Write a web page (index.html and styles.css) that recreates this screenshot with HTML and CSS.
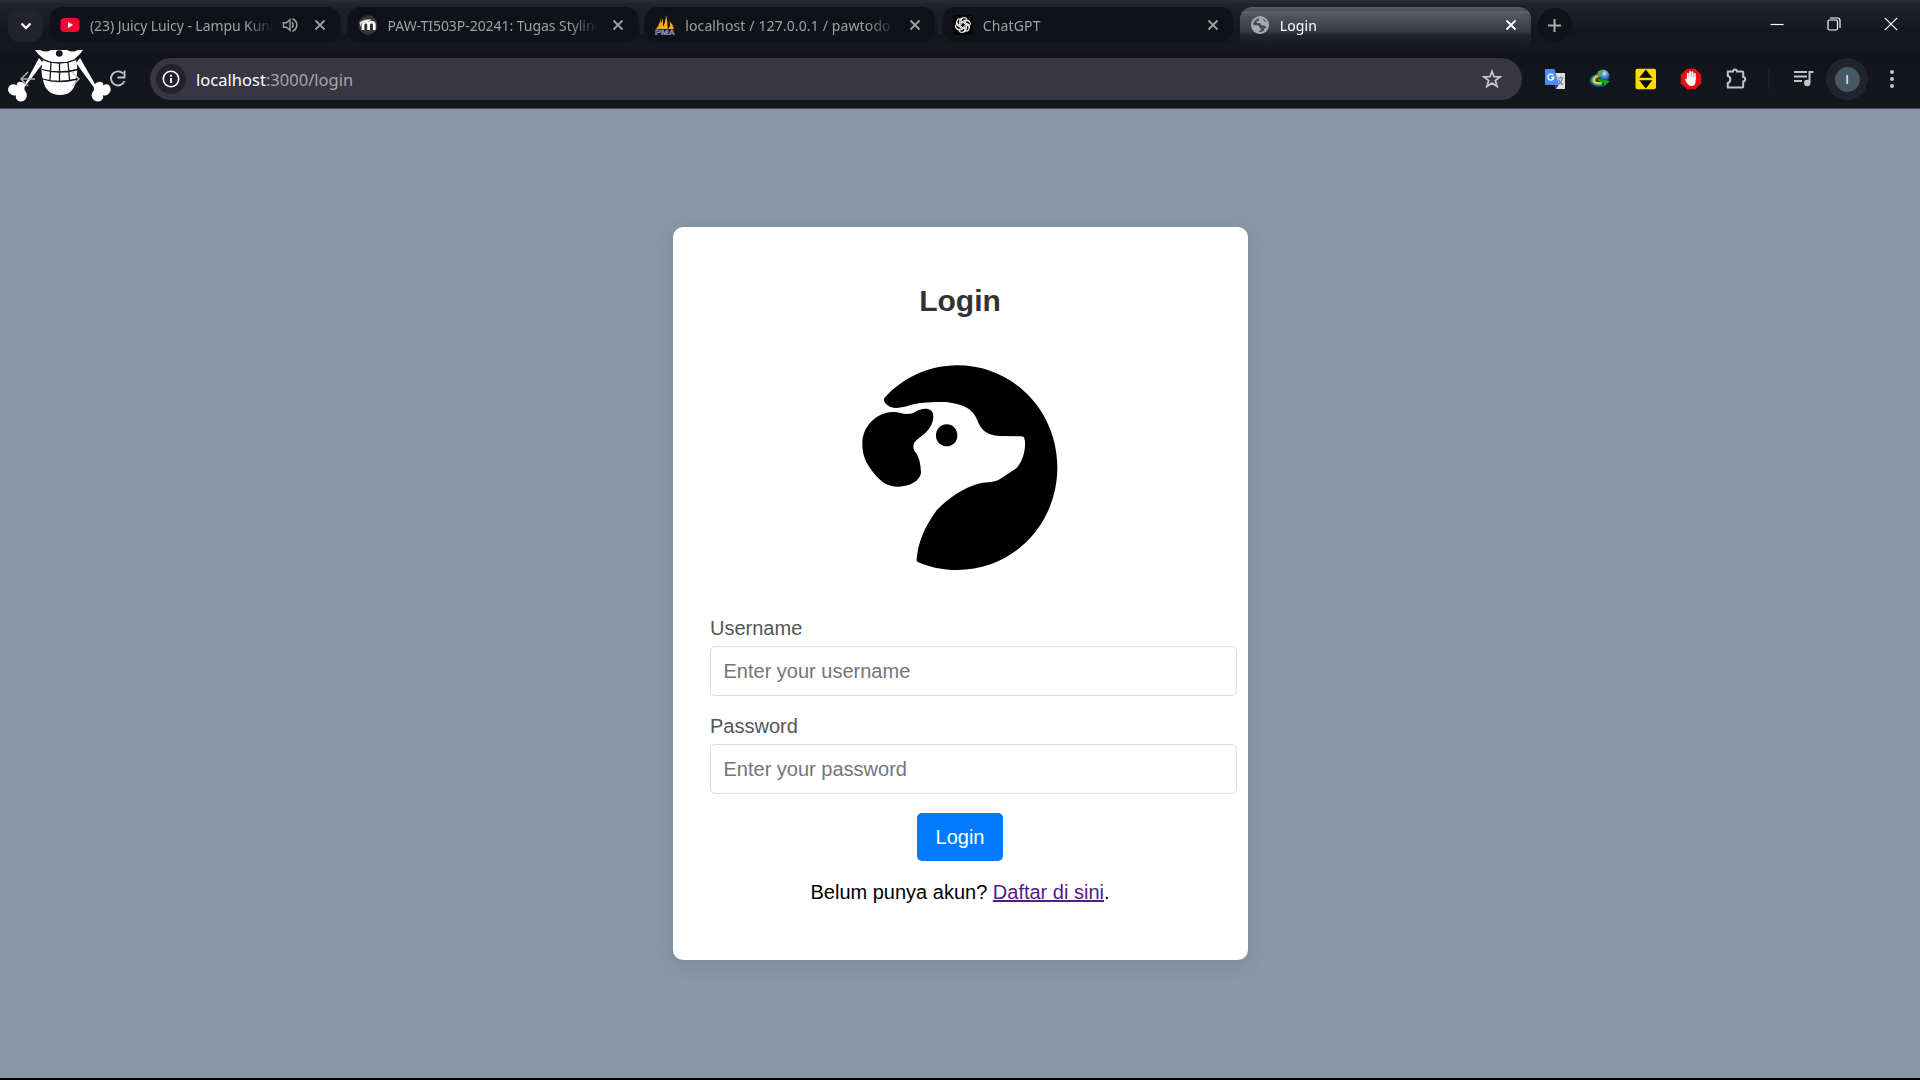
FILE: index.html
```html
<!DOCTYPE html>
<html lang="id">
<head>
<meta charset="utf-8">
<title>Login</title>
<link rel="stylesheet" href="styles.css">
</head>
<body>
<svg class="defs" width="0" height="0" aria-hidden="true">
  <symbol id="x" viewBox="0 0 12 12"><path d="M1.500 1.500l9 9M10.500 1.500l-9 9" stroke="currentColor" stroke-width="1.800" fill="none"/></symbol>
</svg>
<header class="browser">
  <div class="tabstrip">
    <button class="tab-search"><svg width="12" height="8" viewBox="0 0 12 8"><path d="M1.500 1.500L6 6l4.500-4.500" fill="none" stroke="#fff" stroke-width="2.300"/></svg></button>
    <div class="tabs">
      <div class="tab">
        <svg class="favicon" viewBox="0 0 20 20"><rect x="0.500" y="3" width="19" height="14" rx="4" fill="#ff0033"/><path d="M8 7l5 3-5 3z" fill="#fff"/></svg>
        <span class="title snug">(23) Juicy Luicy - Lampu Kuning</span>
        <svg class="audio" viewBox="0 0 16 16"><path d="M1.500 5.700h3L8 2.500v11L4.500 10.300h-3z" fill="none" stroke="currentColor" stroke-width="1.400"/><path d="M10 5.200q2.300 2.800 0 5.600M10.500 1.800q4.300 1.700 4.300 6.200t-4.300 6.200" fill="none" stroke="currentColor" stroke-width="1.500"/></svg>
        <svg class="close"><use href="#x"/></svg>
      </div>
      <i class="divider"></i>
      <div class="tab">
        <svg class="favicon" viewBox="0 0 20 20"><circle cx="10" cy="10" r="9.700" fill="#343434"/><path d="M5 15V9.500q0-2.300 2.700-2.300t2.900 2.300V15M10.600 15V9.500q0-2.300 2.800-2.300t2.900 2.300V15" fill="none" stroke="#fff" stroke-width="2.700"/><path d="M1.500 7.500L7 5l6-.5-5 3-5 .3-.3 4" fill="#eee" stroke="#ddd" stroke-width=".5"/></svg>
        <span class="title">PAW-TI503P-20241: Tugas Styling</span>
        <svg class="close"><use href="#x"/></svg>
      </div>
      <i class="divider"></i>
      <div class="tab">
        <svg class="favicon" viewBox="0 0 20 20"><path d="M1 14Q5 9 5.500 3.500Q6.500 9 6 14zM6.500 14Q11 8 11 0Q13 7 12.500 14zM13 14q3-3 1.500-8q4 4 4.500 8z" fill="#f89c0e"/><path d="M3 14Q7 8 8 3v11zM8 14Q11 8 11 0l1.500 14zM15 14l1-6 1 6z" fill="#f0ab45"/><text class="pma" x="0" y="19.500" textLength="20" lengthAdjust="spacingAndGlyphs">PMA</text></svg>
        <span class="title wide">localhost / 127.0.0.1 / pawtodo /</span>
        <svg class="close"><use href="#x"/></svg>
      </div>
      <i class="divider"></i>
      <div class="tab">
        <svg class="favicon" viewBox="0 0 20 20"><rect width="20" height="20" rx="3" fill="#050505"/><g fill="none" stroke="#f2f2f2" stroke-width="1.200"><path id="petal" d="M8 10V5.500A3.200 3.200 0 0 1 13.800 4M8 7.400l3.800-2.200q2.500-1 4.200 1"/><use href="#petal" transform="rotate(60 10 10)"/><use href="#petal" transform="rotate(120 10 10)"/><use href="#petal" transform="rotate(180 10 10)"/><use href="#petal" transform="rotate(240 10 10)"/><use href="#petal" transform="rotate(300 10 10)"/></g></svg>
        <span class="title wide">ChatGPT</span>
        <svg class="close"><use href="#x"/></svg>
      </div>
      <div class="tab active">
        <svg class="favicon" viewBox="0 0 20 20"><circle cx="10" cy="10" r="9" fill="#a9abb4"/><path d="M9.500 3.200C5.500 3.800 3 7 3 9.800q1.500.7 3.800.5 2.700.2 2.400 2.400l1.500.4v2.200l-2.400 1.200q3 1.200 5.500-.8l.7-2.300 2-1.200-2-1.700-3-.2-1.500-2.300H6.800V6.300l2-.4zM12.800 3.500l1 2.300 2.700 2.100q-1-3.200-3.700-4.400z" fill="#4a4c57"/></svg>
        <span class="title wide">Login</span>
        <svg class="close"><use href="#x"/></svg>
      </div>
    </div>
    <button class="new-tab"><svg width="13" height="13" viewBox="0 0 13 13"><path d="M6.500 0v13M0 6.500h13" stroke="#a9a9a9" stroke-width="2"/></svg></button>
    <div class="window-controls">
      <svg viewBox="0 0 14 14"><path d="M.5 7.500h13" stroke="#fff" stroke-width="1.200"/></svg>
      <svg viewBox="0 0 14 14"><rect x="1" y="3" width="9.500" height="10" rx="1.500" fill="none" stroke="#fff" stroke-width="1.200"/><path d="M3 1h7.500q2.500 0 2.500 2.500V11" fill="none" stroke="#fff" stroke-width="1.200"/></svg>
      <svg viewBox="0 0 14 14"><path d="M.8.8l12.400 12.400M13.200.8L.8 13.200" stroke="#fff" stroke-width="1.200"/></svg>
    </div>
  </div>
  <div class="toolbar">
    <svg class="nav" width="130" height="58" viewBox="0 0 130 58">
      <g fill="#fff">
        <path d="M35 0h48Q77 9 68 12H51Q41 9 35 0z"/>
        <path d="M39 8L25 34q-3-3-6.500-2-2.500 1.500-1.500 3.500-5-3-8 1-3 5.500 3 8.500 1.500.7 4 .2-1 4 3 6 5 1 7-3 2-3-.5-7-1.500-1.500-1-4L43 13z"/>
        <path d="M80 8l15 26q3-3 6.500-2 2.500 1.500 1.500 3.500 5-3 7 1 2.500 5.500-3 8.500-1.500.7-4 .2 1 4-3 6-5 1-7.500-3-2-3 .5-7 1.500-1.500.8-4L76 13z"/>
        <path d="M43 9q15 7 33 0 2.500 11 0 21-2 15-16 15T43 30q-3-10 0-21z"/>
      </g>
      <g fill="none" stroke="#14161e" stroke-width="1.300">
        <path d="M42.500 9.500q16 7 34 0M42 19.500q17 5 36 0M42.500 29q16 5 35 0M51 12l-1 18M59.500 13v18M68 12l1.500 18"/>
      </g>
      <path d="M40 0h11q-5 3-11 0zM67 0h11q-6 3-11 0z" fill="#14161e"/>
      <circle cx="59.300" cy="3.500" r="3.300" fill="#14161e"/>
      <path d="M35 29H22M28 22l-7 7 7 7" fill="none" stroke="#b2b2b2" stroke-width="1.500"/>
      <path d="M72 22l7 7-7 7" fill="none" stroke="#c9c9c9" stroke-width="1.400"/>
      <path d="M124.500 31a7 7 0 1 1-1.500-7.500M124.500 20.500v7h-7" fill="none" stroke="#c3c3c5" stroke-width="1.900"/>
    </svg>
    <div class="omnibox">
      <span class="site-info"><svg width="18" height="18" viewBox="0 0 18 18"><circle cx="9" cy="9" r="7.700" fill="none" stroke="#fff" stroke-width="1.600"/><path d="M9 8v5M9 4.800v1.900" stroke="#fff" stroke-width="1.800"/></svg></span>
      <span class="url"><b>localhost</b>:3000/login</span>
      <svg class="star" width="20" height="20" viewBox="0 0 20 20"><path d="M10 2.200l2 5.400 6.200.2-4.900 3.700 1.800 6-5.100-3.500-5.100 3.500 1.800-6L1.800 7.800 8 7.600z" fill="none" stroke="#c6c6ca" stroke-width="1.700"/></svg>
    </div>
    <div class="extensions">
      <svg viewBox="0 0 22 22"><path d="M9 5h12v16H12z" fill="#dedede"/><path d="M13.500 10h6M16.500 8.500V10M18.500 10q-1 5-5 6.500M14.500 11.500q1 3.500 4.500 5" fill="none" stroke="#6b7f90" stroke-width="1.200"/><path d="M11 17h3.500L12 21z" fill="#3730c8"/><path d="M1 1h9.500L15 17H2q-1 0-1-1z" fill="#4b8bf5"/><path d="M9.200 7.300A3 3 0 1 0 9.800 9.500H7.200" fill="none" stroke="#fff" stroke-width="1.400"/></svg>
      <svg viewBox="0 0 22 22"><defs><radialGradient id="globe" cx=".6" cy=".3"><stop offset="0" stop-color="#cbe6ff"/><stop offset=".5" stop-color="#5595d4"/><stop offset="1" stop-color="#164b90"/></radialGradient></defs><circle cx="14" cy="8" r="6.500" fill="url(#globe)"/><path d="M9 3q4-1 5 1l-2 4-4 2z" fill="#67a832"/><g fill="none"><path d="M9 6Q0 9 2 14q3 5 12 3.500" stroke="#2648c4" stroke-width="1.800"/><path d="M9 7Q2 10 3.500 13.500q3 4 10 2.500" stroke="#33cf35" stroke-width="1.600"/><path d="M9 8Q3.500 11 5.200 13.500q2.500 2.500 8 1" stroke="#ffe23f" stroke-width="1.800"/><path d="M9 9.500Q5 12 8 13.400" stroke="#e2322b" stroke-width="1.500"/></g><path d="M9 11l12 2-6.500 6 .5-3.500L9 13z" fill="#13a713"/></svg>
      <svg viewBox="0 0 22 22"><rect x=".5" y=".7" width="20.500" height="20.500" rx="2" fill="#ffdc00"/><path d="M10.800 1.500l6.500 8.300h-13zM10.800 20.500l6.500-8.300h-13z" fill="#090900"/></svg>
      <svg viewBox="0 0 22 22"><path d="M6.800.8h8.400l6 6v8.400l-6 6H6.800l-6-6V6.800z" fill="#ed0c13"/><path d="M7.800 11V5.700M10.100 10V4M12.400 10V4.300M14.700 11V6" stroke="#fff" stroke-width="1.900" stroke-linecap="round"/><path d="M6.800 9h8.800v4q0 5-4 5-3 0-5.300-4l-1.600-2.700q1-1 2.100.4z" fill="#fff"/></svg>
      <svg viewBox="0 0 22 22"><path d="M2.800 3.500H8q.2-2 2-2t2 2h5.200q1 0 1 1V9q2 .2 2 2.200t-2 2.200v5q0 1-1 1H2.800v-4.500q2.500-.6 2.500-3.500T2.800 8z" fill="none" stroke="#c3c3c5" stroke-width="2"/></svg>
    </div>
    <i class="toolbar-divider"></i>
    <svg class="media" width="20" height="18" viewBox="0 0 20 18"><path d="M0 2h13M0 6.500h13M0 11h8" stroke="#c3c3c5" stroke-width="2"/><path d="M15.500 13V2h4" fill="none" stroke="#c3c3c5" stroke-width="2"/><circle cx="13.200" cy="13" r="3.200" fill="#c3c3c5"/></svg>
    <span class="profile"><span class="avatar">I</span></span>
    <svg class="more" width="6" height="20" viewBox="0 0 6 20"><g fill="#c3c3c5"><circle cx="3" cy="3" r="2"/><circle cx="3" cy="10" r="2"/><circle cx="3" cy="17" r="2"/></g></svg>
  </div>
</header>
<main class="page">
  <section class="card">
    <h2 class="heading">Login</h2>
    <svg class="logo" viewBox="0 0 720 750" role="img" aria-label="Logo">
      <path d="M133 174C190 112 265 77 352 76C520 76 652 213 652 382C652 553 520 690 352 690C308 690 268 681 232 665Q229 663 230 657C234 605 256 557 289 512C320 478 375 440 420 430C445 426 464 427 479 418L530 384C546 366 557 335 555 304L552 292Q550 289 540 289L478 288C440 286 423 270 412 241C398 203 366 193 319 186C275 185 235 187 205 197C177 205 157 207 143 196Q129 186 133 174Z"/>
      <path d="M67 312C66 260 108 218 158 216C181 215 192 227 220 219C237 209 249 205 263 207Q282 211 280 233C276 270 246 286 230 300Q214 315 223 332C238 351 242 369 243 400C239 424 206 441 174 440C142 440 123 424 108 407C84 379 67 355 67 312Z"/>
      <rect x="288" y="253" width="64" height="66" rx="32"/>
    </svg>
    <form class="form">
      <label class="label" for="username">Username</label>
      <input class="input" id="username" type="text" placeholder="Enter your username">
      <label class="label" for="password">Password</label>
      <input class="input" id="password" type="password" placeholder="Enter your password">
      <button class="submit" type="button">Login</button>
    </form>
    <p class="signup">Belum punya akun? <a class="link" href="#">Daftar di sini</a>.</p>
  </section>
</main>
</body>
</html>
```
FILE: styles.css
```css
* { box-sizing: border-box; }
body {
  margin: 0;
  height: 1080px;
  display: flex;
  flex-direction: column;
  overflow: hidden;
  background: #000;
  font-family: "Liberation Sans", Arial, sans-serif;
}
svg { display: block; flex: none; }
button { border: 0; padding: 0; font: inherit; }
.defs { position: absolute; }

.browser {
  height: 109px;
  flex: none;
  display: flex;
  flex-direction: column;
  border-bottom: 1px solid #45434f;
  font-family: "Noto Sans", "Open Sans", sans-serif;
  background: linear-gradient(#2a2c38 0, #1f212d 5px, #1a1c27 18px, #14161e 34px, #15181f 48px, #11131c 58px, #14161e 75px);
}
.tabstrip { height: 50px; display: flex; align-items: flex-start; padding: 7px 0 0 8px; }
.tab-search {
  width: 35px; height: 33px; margin-top: 2px;
  border-radius: 12px;
  background: #23222f;
  display: grid; place-items: center;
}
.tabs { display: flex; margin-left: 7px; }
.tab {
  width: 290px; height: 35px;
  display: flex; align-items: center;
  padding: 1px 14px 0 10px;
  border-radius: 12px;
  background: #101219;
  color: #a0a0a0;
  font-size: 14px;
}
.favicon { width: 20px; height: 20px; margin-right: 10px; }
.pma { font: bold 8px "Liberation Sans", sans-serif; fill: #343b72; stroke: #cfd2ed; stroke-width: .35px; }
.title {
  flex: 1;
  overflow: hidden;
  white-space: nowrap;
  line-height: 24px;
  padding-top: 1px;
  letter-spacing: -.05px;
  margin-right: 14px;
  -webkit-mask-image: linear-gradient(90deg, #000 calc(100% - 28px), transparent);
  mask-image: linear-gradient(90deg, #000 calc(100% - 28px), transparent);
}
.title.snug { letter-spacing: -.08px; }
.title.wide { letter-spacing: .13px; }
.audio { width: 16px; height: 16px; margin: 0 16px 0 -6px; }
.close { width: 12px; height: 12px; }
.divider { width: 3px; height: 20px; margin: 8px 2px 0 2.600px; border-radius: 2px; background: #211f2c; }
.tab.active {
  width: 291px; height: 51px;
  margin-left: 7px;
  padding-bottom: 16px;
  border-radius: 12px 12px 0 0;
  color: #fff;
  background: linear-gradient(#5c5e68 0, #484a55 4px, #6b6d77 5px, #555762 6px, #484a55 14px, #353743 25px, #222430 28px, #171923 38px, #11131c 51px);
}
.new-tab {
  width: 34px; height: 34px;
  margin: 1px 0 0 7px;
  border-radius: 50%;
  background: #101219;
  display: grid; place-items: center;
}
.window-controls { display: flex; gap: 43px; margin: 10px 22px 0 auto; }
.window-controls svg { width: 14px; height: 14px; }

.toolbar { height: 58px; display: flex; align-items: center; }
.nav { width: 130px; height: 58px; }
.omnibox {
  width: 1372px; height: 42px;
  margin-left: 20px;
  padding: 0 20px 0 6px;
  border-radius: 21px;
  background: #383643;
  display: flex; align-items: center;
}
.site-info {
  width: 30px; height: 30px;
  border-radius: 50%;
  background: #232230;
  display: grid; place-items: center;
}
.url { flex: 1; margin-left: 10px; font-size: 16.5px; letter-spacing: .02px; color: #a5a5ad; }
.url b { font-weight: 400; color: #fff; }
.extensions { display: flex; gap: 23.25px; margin-left: 22px; }
.extensions svg { width: 22px; height: 22px; }
.toolbar-divider { width: 2px; height: 20px; margin-left: 21px; background: #1e1e29; }
.media { margin-left: 24px; }
.profile {
  width: 42px; height: 42px;
  margin-left: 12px;
  border-radius: 50%;
  background: #23222f;
  display: grid; place-items: center;
}
.avatar {
  width: 25px; height: 25px;
  border-radius: 50%;
  background: #455a64;
  color: #fff;
  font: 13px/25px "Liberation Sans", sans-serif;
  text-align: center;
}
.more { margin-left: 21px; }

.page {
  height: 969px;
  display: grid; place-items: center;
  background: #8998a8;
}
.card {
  width: 575px; height: 733px;
  padding: 37.5px;
  border-radius: 10px;
  background: #fff;
  box-shadow: 0 5px 20px rgba(0, 0, 0, .1);
  display: flex; flex-direction: column;
}
.heading { margin: 19.5px 0 0; font-size: 30px; line-height: 34px; text-align: center; color: #333; }
.logo { width: 240px; height: 250px; margin: 22px auto 0; }
.form { display: flex; flex-direction: column; align-items: flex-start; margin-top: 27px; }
.label { font-size: 20px; line-height: 23px; margin-bottom: 6px; color: #555; }
.input {
  width: 527px; height: 50px;
  flex: none;
  margin-bottom: 19px;
  padding: 1px 12.500px 0;
  border: 1px solid #ddd;
  border-radius: 5px;
  background: #fff;
  font: 20px "Liberation Sans", Arial, sans-serif;
}
.input::placeholder { color: #757575; }
.submit {
  width: 86px; height: 48px;
  align-self: center;
  border-radius: 5px;
  background: #007bff;
  color: #fff;
  font-size: 20px;
}
.signup { margin: 20px 0 0; font-size: 20px; line-height: 23px; text-align: center; color: #000; }
.link { color: #551a8b; }
```
